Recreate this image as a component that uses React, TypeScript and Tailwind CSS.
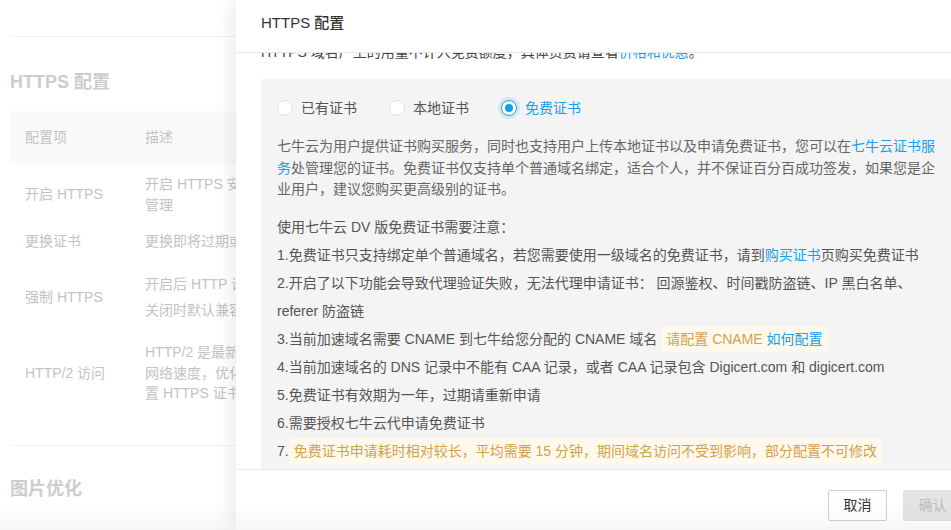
import { ReactNode } from "react";

const Radio = ({ label, checked }: { label: string; checked?: boolean }) => (
  <label className="flex items-center mr-[32px]">
    <span
      className={`w-4 h-4 rounded-full bg-white flex items-center justify-center ${
        checked
          ? "border border-[#14a0e6] shadow-[0_0_0_3px_rgba(20,160,230,0.14)]"
          : "border border-[#e0e0e0]"
      }`}>
      {checked && <span className="w-2 h-2 rounded-full bg-[#14a0e6]" />}
    </span>
    <span className={`ml-[8px] ${checked ? "text-[#14a0e6]" : "text-[#555]"}`}>{label}</span>
  </label>
);

const Tip = ({ children }: { children: ReactNode }) => (
  <span className="inline-block bg-[#fff9ed] text-[#d3a14b] leading-[20px] py-[3px] px-[5px] rounded-[2px]">
    {children}
  </span>
);

const rows = [
  { name: "开启 HTTPS", h: "h-[61px]", desc: ["开启 HTTPS 安全加速，需配置证书", "管理"] },
  { name: "更换证书", h: "h-[32px]", desc: ["更换即将过期或已失效的证书"] },
  { name: "强制 HTTPS", h: "h-[80px]", desc: ["开启后 HTTP 请求将跳转至 HTTPS", "关闭时默认兼容 HTTP 与 HTTPS"], gap: true },
  { name: "HTTP/2 访问", h: "h-[72px]", desc: ["HTTP/2 是最新的 HTTP 协议", "网络速度，优化用户体验", "置 HTTPS 证书后生效"] },
];

const BackgroundPage = () => (
  <div className="pl-[10px] pt-[36px] w-[600px]">
    <div className="border-t border-[#f1f1f1]" />
    <h2 className="mt-[33px] text-[18px] leading-[24px] font-bold text-[#cdcdcd]">HTTPS 配置</h2>
    <div className="mt-[17px] text-[14px] text-[#c3c3c3]">
      <div className="flex items-center h-[53px] bg-[#fafafa]">
        <div className="w-[135px] pl-[15px]">配置项</div>
        <div>描述</div>
      </div>
      {rows.map((r) => (
        <div key={r.name} className={`flex items-center ${r.h}`}>
          <div className="w-[135px] pl-[15px] whitespace-nowrap">{r.name}</div>
          <div className={`flex flex-col whitespace-nowrap ${r.gap ? "leading-[26px]" : "leading-[20.5px]"}`}>
            {r.desc.map((d) => (
              <span key={d}>{d}</span>
            ))}
          </div>
        </div>
      ))}
    </div>
    <div className="mt-[36px] border-t border-[#f1f1f1]" />
    <h2 className="mt-[31px] text-[18px] leading-[24px] font-bold text-[#cdcdcd]">图片优化</h2>
  </div>
);

const Drawer = () => (
  <div className="absolute top-0 left-[236px] h-full w-[750px] bg-white flex flex-col shadow-[-6px_0_18px_rgba(0,0,0,0.07)]">
    <div className="h-[53px] shrink-0 border-b border-[#e8e8e8] px-[25px] flex items-center pb-[5px]">
      <span className="text-[15px] font-medium text-[#333]">HTTPS 配置</span>
    </div>
    <div className="flex-1 overflow-hidden px-[25px] text-[14px] text-[#666]">
      <p className="-mt-[15px] leading-[28px] text-[#444] whitespace-nowrap">
        HTTPS 域名产生的用量不计入免费额度，具体资费请查看<span className="text-[#14a0e6]">价格和优惠</span>。
      </p>
      <div className="mt-[13px] w-[692px] bg-[#f4f4f4] px-4 pt-[18px] pb-6">
        <div className="flex items-center h-[22px]">
          <Radio label="已有证书" />
          <Radio label="本地证书" />
          <Radio label="免费证书" checked />
        </div>
        <p className="mt-[17px] leading-[21.5px]">
          七牛云为用户提供证书购买服务，同时也支持用户上传本地证书以及申请免费证书，您可以在
          <span className="text-[#14a0e6]">七牛云证书服务</span>
          处管理您的证书。免费证书仅支持单个普通域名绑定，适合个人，并不保证百分百成功签发，如果您是企业用户，建议您购买更高级别的证书。
        </p>
        <div className="mt-[12px] leading-[28px] text-[#555]">
          <p>使用七牛云 DV 版免费证书需要注意：</p>
          <p>
            1.免费证书只支持绑定单个普通域名，若您需要使用一级域名的免费证书，请到
            <span className="text-[#14a0e6]">购买证书</span>页购买免费证书
          </p>
          <p>2.开启了以下功能会导致代理验证失败，无法代理申请证书： 回源鉴权、时间戳防盗链、IP 黑白名单、referer 防盗链</p>
          <p>
            3.当前加速域名需要 CNAME 到七牛给您分配的 CNAME 域名{" "}
            <Tip>
              请配置 CNAME <span className="text-[#14a0e6]">如何配置</span>
            </Tip>
          </p>
          <p>4.当前加速域名的 DNS 记录中不能有 CAA 记录，或者 CAA 记录包含 Digicert.com 和 digicert.com</p>
          <p>5.免费证书有效期为一年，过期请重新申请</p>
          <p>6.需要授权七牛云代申请免费证书</p>
          <p>
            7.<Tip>免费证书申请耗时相对较长，平均需要 15 分钟，期间域名访问不受到影响，部分配置不可修改</Tip>
          </p>
        </div>
      </div>
    </div>
    <div className="h-[61px] shrink-0 border-t border-[#e8e8e8] flex justify-end gap-4 pt-[20px] px-[24px]">
      <button className="w-[59px] h-[31px] border border-[#cfcfcf] rounded-[2px] bg-white text-[14px] text-[#333]">
        取消
      </button>
      <button className="w-[59px] h-[31px] border border-[#e0e0e0] rounded-[2px] bg-[#e4e4e4] text-[14px] text-[#bdbdbd]">
        确认
      </button>
    </div>
  </div>
);

export default function App() {
  return (
    <div className="relative w-[951px] h-[530px] overflow-hidden bg-white font-['Liberation_Sans','Noto_Sans_CJK_SC',sans-serif]">
      <BackgroundPage />
      <Drawer />
      <div className="absolute left-0 right-0 bottom-0 h-[28px] pointer-events-none bg-gradient-to-b from-transparent to-black/[0.035]" />
    </div>
  );
}
